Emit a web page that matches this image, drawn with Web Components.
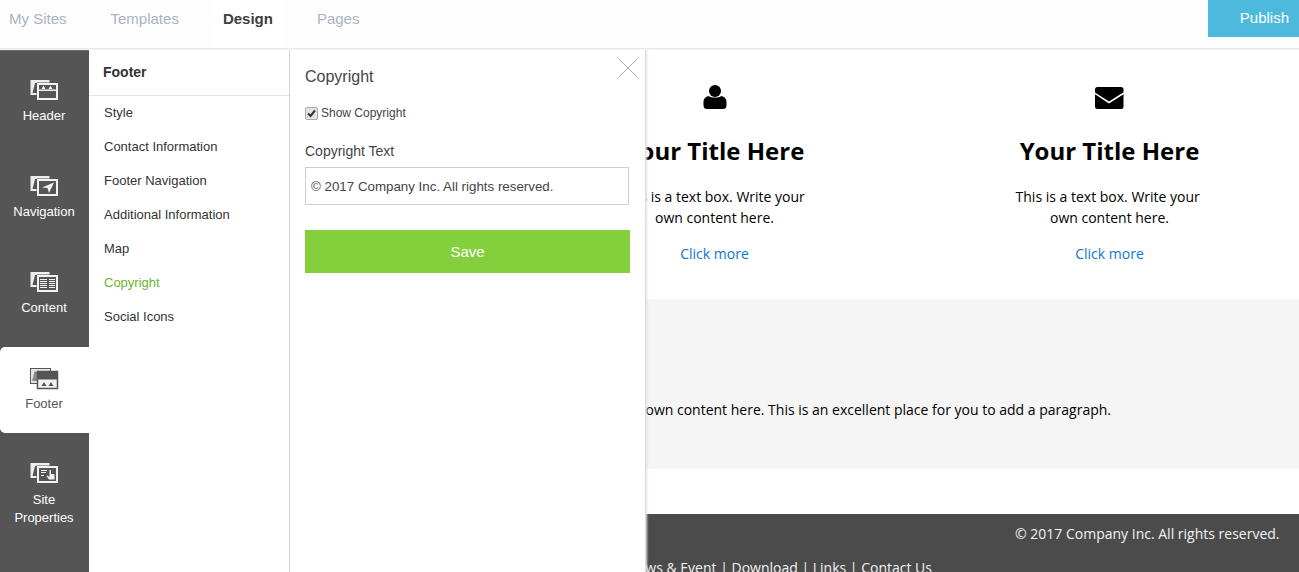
<!DOCTYPE html>
<html lang="en"><head><meta charset="utf-8"><title>Design</title>
<style>
html,body{margin:0;height:100%;overflow:hidden;background:#fff}
body{font-family:"Liberation Sans",Arial,sans-serif}
app-shell{height:100vh}
</style></head><body>
<app-shell>
  <top-bar slot="top">
    <nav-tab>My Sites</nav-tab><nav-tab>Templates</nav-tab><nav-tab active>Design</nav-tab><nav-tab>Pages</nav-tab>
    <publish-button slot="action">Publish</publish-button>
  </top-bar>
  <site-preview slot="site"></site-preview>
  <side-rail slot="rail">
    <rail-item icon="header">Header</rail-item>
    <rail-item icon="navigation">Navigation</rail-item>
    <rail-item icon="content">Content</rail-item>
    <rail-item icon="footer" active>Footer</rail-item>
    <rail-item icon="site" last>Site<br>Properties</rail-item>
  </side-rail>
  <sub-menu slot="menu" heading="Footer">
    <menu-link>Style</menu-link><menu-link>Contact Information</menu-link><menu-link>Footer Navigation</menu-link>
    <menu-link>Additional Information</menu-link><menu-link>Map</menu-link><menu-link active>Copyright</menu-link><menu-link>Social Icons</menu-link>
  </sub-menu>
  <copyright-panel slot="panel"></copyright-panel>
</app-shell>
<script>
const def=(n,html,extra={})=>{
  const t=document.createElement('template');t.innerHTML=html;
  customElements.define(n,class extends HTMLElement{
    constructor(){super();this.attachShadow({mode:'open'}).appendChild(t.content.cloneNode(true));}
    connectedCallback(){extra.init&&extra.init.call(this);}
  });
};
def('app-shell',`<style>
:host{display:flex;flex-direction:column;overflow:hidden}
.stage{position:relative;flex:1;min-height:0;overflow:hidden}
.overlay{position:absolute;left:0;top:0;bottom:0;display:flex;align-items:stretch}
</style><slot name="top"></slot><div class="stage"><slot name="site"></slot>
<div class="overlay"><slot name="rail"></slot><slot name="menu"></slot><slot name="panel"></slot></div></div>`);
def('top-bar',`<style>
:host{display:flex;justify-content:space-between;align-items:flex-start;height:48px;background:#fdfdfd;border-bottom:1px solid #e9e9e9;box-shadow:0 1px 1px #f4f4f4;position:relative;z-index:2}
nav{display:flex;gap:22px;padding-left:9px;height:48px}
::slotted(nav-tab:first-child){padding-left:0;margin-left:0}
</style><nav><slot></slot></nav><slot name="action"></slot>`);
def('nav-tab',`<style>
:host{display:block;padding:0 11px;font-size:15px;line-height:37px;color:#a9b3c3}
:host([active]){font-weight:700;color:#3d3d3d;background:#fff}
</style><slot></slot>`);
def('publish-button',`<style>
:host{display:block;width:91px;height:37px;box-sizing:border-box;background:#4dbadd;color:#fff;font-size:15px;line-height:35px;text-align:right;padding-right:10px}
</style><slot></slot>`);
const front=`<rect x="6.5" y="2.5" width="22" height="18" fill="#555"/><rect x="8" y="4" width="19" height="15" fill="#555" stroke="#f2f2f2" stroke-width="2"/>`;
const back=`<rect x="0.5" y="0" width="19" height="15" fill="#eee"/><path fill="#555" d="M5 3H7V13H2.500Z"/>${front}`;
const icons={
 header:`${back}<path fill="#f2f2f2" d="M11.500 9 13.500 5.500 15.500 9ZM18.500 9 20.500 5.500 22.500 9Z"/><rect x="9" y="9.500" width="17" height="1.500" fill="#f2f2f2"/>`,
 navigation:`${back}<path fill="#f2f2f2" d="M24 6.500 12 11.500 17.500 12 19 17Z"/>`,
 content:`${back}<path stroke="#f2f2f2" stroke-width="1" fill="none" d="M10 7.500H17M10 9.500H17M10 11.500H17M10 13.500H17M10 15.500H17M19 7.500H25M19 9.500H25M19 11.500H25M19 13.500H25M19 15.500H25"/>`,
 footer:`<rect x=".5" y=".5" width="20" height="15" fill="#e6e6e6" stroke="#555"/><path fill="#8a8a8a" d="M4.500 3.500H7V13H2Z"/><rect x="7.500" y="3.500" width="20" height="17" fill="#f0f0f0" stroke="#555" stroke-width="1.500"/><rect x="8" y="4" width="19" height="7.500" fill="#555"/><path fill="#555" d="M11.500 18 14 14 16.500 18ZM18.500 18 21 14 23.500 18Z"/>`,
 site:`${back}<path stroke="#f2f2f2" stroke-width="1" fill="none" d="M11 7.500H17M11 9.500H16M11 12.500H14"/><path fill="#f2f2f2" d="M19.500 7h1.500v4h3.500v5.500h-5.500l-2.500-3.500 1-.5 2 1.500Z"/>`
};
def('rail-item',`<style>
:host{display:block;height:96px;box-sizing:border-box;padding:31px 1px 0 0;color:#fff;text-align:center;font-size:13px;line-height:18px}
:host([active]){height:86px;margin-top:10px;padding-top:21px;background:#fff;color:#555;border-radius:5px 0 0 5px;width:90px;padding-right:2px}
:host([last]){padding-top:30px}
svg{display:block;margin:0 auto 7px;width:28px;height:20px;overflow:visible}
:host([last]) svg{margin-bottom:8px}
</style><svg viewBox="0 0 28 20"></svg><slot></slot>`,{init(){
  this.shadowRoot.querySelector('svg').innerHTML=icons[this.getAttribute('icon')];
}});
def('side-rail',`<style>
:host{display:block;width:89px;background:#555;flex:none}
</style><slot></slot>`);
def('sub-menu',`<style>
:host{display:block;width:200px;background:#fff;border-right:1px solid #d4d4d4;flex:none}
h2{margin:0;height:47px;box-sizing:border-box;padding:15px 0 0 14px;font-size:14px;line-height:16px;font-weight:700;color:#333;border-bottom:1px solid #e5e5e5}
</style><h2></h2><div><slot></slot></div>`,{init(){
  this.shadowRoot.querySelector('h2').textContent=this.getAttribute('heading');
}});
def('menu-link',`<style>
:host{display:block;height:34px;line-height:34px;padding-left:15px;font-size:13px;color:#333}
:host([active]){color:#6db52f}
</style><slot></slot>`);
def('copyright-panel',`<style>
:host{display:block;position:relative;width:356px;box-sizing:border-box;padding:18px 15px 0;background:#fff;border-right:1px solid #ddd;box-shadow:1px 0 2px #e4e4e4;flex:none;color:#444}
h3{margin:0;font-size:16px;line-height:20px;font-weight:400}
.close{position:absolute;right:7px;top:9px;width:20px;height:20px;display:block}
.check{display:flex;align-items:center;gap:3px;margin-top:19px;font-size:12px;line-height:14px}
.box{width:11px;height:11px;border:1px solid #aaa;border-radius:2px;background:#e4e4e4;display:block}
.lab{margin-top:21px;font-size:14px;line-height:20px}
.field{margin-top:6px;width:324px;height:38px;box-sizing:border-box;border:1px solid #d0d0d0;font-size:13.33px;line-height:37px;padding-left:5px;color:#444}
.save{margin-top:25px;height:43px;width:325px;background:#84cf3c;color:#fff;font-size:15px;line-height:43px;text-align:center}
</style>
<h3>Copyright</h3>
<svg class="close" viewBox="0 0 20 20"><path d="M.5.5 19.500 19.500M19.500.5 .5 19.500" stroke="#aaa" stroke-width="1" fill="none"/></svg>
<div class="check"><svg class="box" viewBox="0 0 11 11"><path d="M2 5.500 4.500 8 9 2.500" stroke="#333" stroke-width="2" fill="none"/></svg><span>Show Copyright</span></div>
<div class="lab">Copyright Text</div>
<div class="field">© 2017 Company Inc. All rights reserved.</div>
<div class="save">Save</div>`);
def('feature-col',`<style>
:host{display:block;text-align:center;color:#000}
svg{display:block;margin:0 auto;height:26px;width:30px}
h4{margin:24px 0 0;font-size:24px;line-height:33px;font-weight:700;white-space:nowrap}
p{margin:19px auto 0;font-size:14px;line-height:21px;width:200px}
a{display:block;margin-top:15px;font-size:14px;line-height:21px;color:#0b78d1}
</style><svg viewBox="0 0 30 26"></svg><h4>Your Title Here</h4><p>This is a text box. Write your&nbsp; own content here.</p><a>Click more</a>`,{init(){
  this.shadowRoot.querySelector('svg').innerHTML=this.getAttribute('icon')==='user'
  ?'<circle cx="15" cy="7" r="6" fill="#000"/><path fill="#000" d="M3.500 21.500V18C3.500 14.500 6 12 9 12.200 11 14 19 14 21 12.200 24 12 26.500 14.500 26.500 18V21.500C26.500 24 25 25 23 25H7C5 25 3.500 24 3.500 21.500Z"/>'
  :'<rect x="0" y="3" width="28.500" height="22" rx="2.500" fill="#000"/><path d="M-.5 9 14 18.500 29 9" stroke="#fff" stroke-width="1.500" fill="none"/>';
}});
def('site-preview',`<style>
:host{display:block;height:100%;overflow:hidden;background:#fff;font-family:"Open Sans",sans-serif;color:#000}
.cols{display:grid;grid-template-columns:395px 395px;padding:35px 0 0 517px;height:215px;overflow:hidden}
.band{background:#f5f5f5;height:170px;box-sizing:border-box;padding:100px 188px 0 0;text-align:right;font-size:14px;line-height:21px}
.foot{margin-top:45px;background:#4b4b4b;color:#f2f2f2;font-size:14px;line-height:21px;height:100px;box-sizing:border-box;padding:9px 19.5px 0 0;text-align:right}
.links{margin-top:13px;padding-right:347.5px;white-space:nowrap}
</style>
<div class="cols"><feature-col icon="user"></feature-col><feature-col icon="mail"></feature-col></div>
<div class="band">This is a text box. Write your own content here. This is an excellent place for you to add a paragraph.</div>
<div class="foot"><div>© 2017 Company Inc. All rights reserved.</div><div class="links">Home | About | News &amp; Event | Download | Links | Contact Us</div></div>`);
</script>
</body></html>
